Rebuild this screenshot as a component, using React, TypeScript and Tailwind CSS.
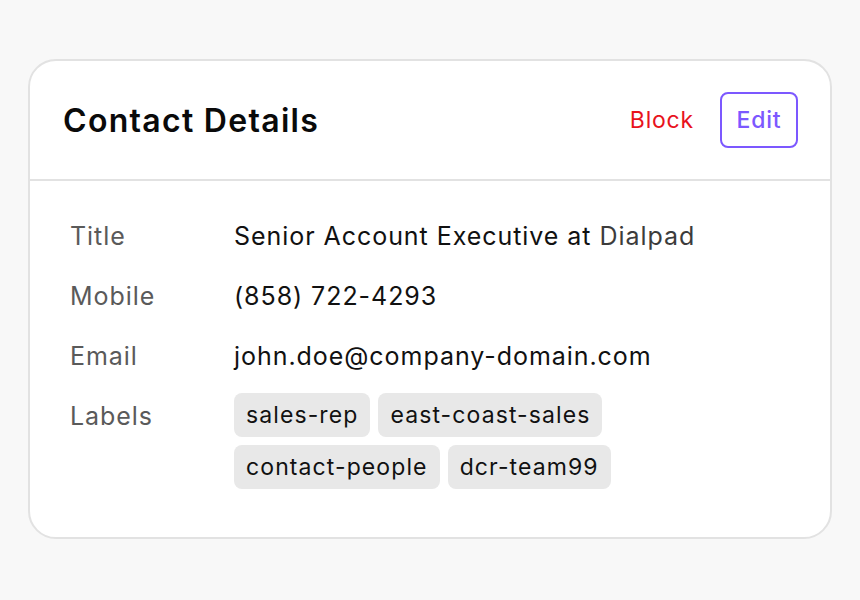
import React from "react";

export default function App() {
  const rows: { label: string; value: React.ReactNode }[] = [
    {
      label: "Title",
      value: (
        <>
          Senior Account Executive at <span className="text-[#3c3c3c]">Dialpad</span>
        </>
      ),
    },
    { label: "Mobile", value: "(858) 722-4293" },
    { label: "Email", value: "john.doe@company-domain.com" },
  ];
  const tags = ["sales-rep", "east-coast-sales", "contact-people", "dcr-team99"];
  return (
    <div
      className="w-[860px] h-[600px] bg-[#f8f8f8] pt-[59px] pl-[28px]"
      style={{ fontFamily: "Inter, 'Noto Sans', sans-serif" }}
    >
      <div className="w-[804px] h-[480px] bg-white border-2 border-[#e2e2e2] rounded-[28px] flex flex-col">
        <div className="h-[120px] border-b-2 border-[#e2e2e2] flex items-center justify-between pl-[33px] pr-[32px]">
          <h1 className="text-[32px] font-semibold text-[#0a0a0a] tracking-[1.3px] pt-[2px]">Contact Details</h1>
          <div className="flex items-center gap-[26px]">
            <button className="text-[23px] tracking-[0.8px] text-[#e8121c]">Block</button>
            <button className="h-[56px] w-[78px] border-2 border-[#7c58ff] rounded-[8px] text-[23px] tracking-[0.8px] text-[#7c58ff] font-medium">
              Edit
            </button>
          </div>
        </div>
        <div className="pt-[37px] pl-[40px] text-[25px] tracking-[0.95px] leading-[36px]">
          {rows.map((r) => (
            <div key={r.label} className="flex mb-[24px]">
              <div className="w-[164px] text-[#5a5a5a]">{r.label}</div>
              <div className="text-[#111]">{r.value}</div>
            </div>
          ))}
          <div className="flex -mt-[5px]">
            <div className="w-[164px] text-[#5a5a5a] pt-[5px]">Labels</div>
            <div className="flex flex-wrap gap-[8px] w-[420px]">
              {tags.map((t) => (
                <span
                  key={t}
                  className="h-[44px] px-[12px] rounded-[8px] bg-[#e8e8e8] text-[#111] text-[23px] tracking-[1.1px] leading-[44px]"
                >
                  {t}
                </span>
              ))}
            </div>
          </div>
        </div>
      </div>
    </div>
  );
}
